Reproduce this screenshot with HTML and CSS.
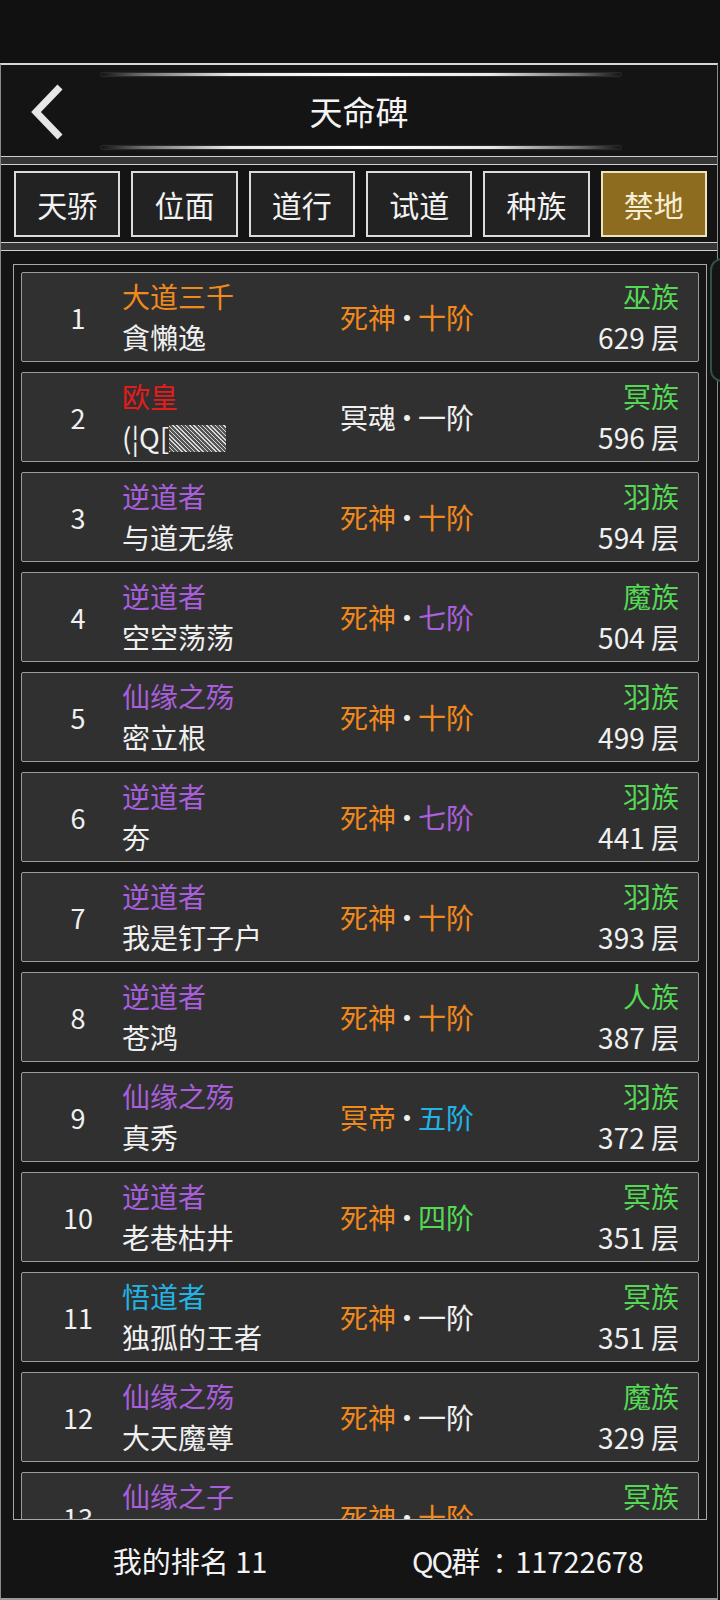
FILE: index.html
```html
<!DOCTYPE html>
<html lang="zh">
<head>
<meta charset="utf-8">
<title>天命碑</title>
<link rel="stylesheet" href="styles.css">
</head>
<body>
<div class="status"></div>
<div class="panel">
  <header class="titlebar">
    <div class="deco"></div>
    <div class="title-row">
      <svg class="back" width="40" height="56" viewBox="0 0 40 56"><path d="M33 3 L9 28 L33 53" fill="none" stroke="#e6e6e6" stroke-width="7"/></svg>
      <h1 class="title">天命碑</h1>
      <span></span>
    </div>
    <div class="deco"></div>
  </header>
  <div class="sep"></div>
  <nav class="tabs">
    <div class="tab">天骄</div>
    <div class="tab">位面</div>
    <div class="tab">道行</div>
    <div class="tab">试道</div>
    <div class="tab">种族</div>
    <div class="tab active">禁地</div>
  </nav>
  <div class="sep"></div>
  <main class="list-wrap">
    <div class="list">
      <div class="row"><div class="rank">1</div><div class="who"><div class="c-orange">大道三千</div><div>貪懶逸</div></div><div class="lvl"><span class="c-orange">死神</span><span class="dot">·</span><span class="c-orange">十阶</span></div><div class="side"><div class="c-green">巫族</div><div>629 层</div></div></div>
      <div class="row"><div class="rank">2</div><div class="who"><div class="c-red">欧皇</div><div>(¦Q[<span class="hatch"></span></div></div><div class="lvl"><span>冥魂</span><span class="dot">·</span><span>一阶</span></div><div class="side"><div class="c-green">冥族</div><div>596 层</div></div></div>
      <div class="row"><div class="rank">3</div><div class="who"><div class="c-purple">逆道者</div><div>与道无缘</div></div><div class="lvl"><span class="c-orange">死神</span><span class="dot">·</span><span class="c-orange">十阶</span></div><div class="side"><div class="c-green">羽族</div><div>594 层</div></div></div>
      <div class="row"><div class="rank">4</div><div class="who"><div class="c-purple">逆道者</div><div>空空荡荡</div></div><div class="lvl"><span class="c-orange">死神</span><span class="dot">·</span><span class="c-purple">七阶</span></div><div class="side"><div class="c-green">魔族</div><div>504 层</div></div></div>
      <div class="row"><div class="rank">5</div><div class="who"><div class="c-purple">仙缘之殇</div><div>密立根</div></div><div class="lvl"><span class="c-orange">死神</span><span class="dot">·</span><span class="c-orange">十阶</span></div><div class="side"><div class="c-green">羽族</div><div>499 层</div></div></div>
      <div class="row"><div class="rank">6</div><div class="who"><div class="c-purple">逆道者</div><div>夯</div></div><div class="lvl"><span class="c-orange">死神</span><span class="dot">·</span><span class="c-purple">七阶</span></div><div class="side"><div class="c-green">羽族</div><div>441 层</div></div></div>
      <div class="row"><div class="rank">7</div><div class="who"><div class="c-purple">逆道者</div><div>我是钉子户</div></div><div class="lvl"><span class="c-orange">死神</span><span class="dot">·</span><span class="c-orange">十阶</span></div><div class="side"><div class="c-green">羽族</div><div>393 层</div></div></div>
      <div class="row"><div class="rank">8</div><div class="who"><div class="c-purple">逆道者</div><div>苍鸿</div></div><div class="lvl"><span class="c-orange">死神</span><span class="dot">·</span><span class="c-orange">十阶</span></div><div class="side"><div class="c-green">人族</div><div>387 层</div></div></div>
      <div class="row"><div class="rank">9</div><div class="who"><div class="c-purple">仙缘之殇</div><div>真秀</div></div><div class="lvl"><span class="c-orange">冥帝</span><span class="dot">·</span><span class="c-cyan">五阶</span></div><div class="side"><div class="c-green">羽族</div><div>372 层</div></div></div>
      <div class="row"><div class="rank">10</div><div class="who"><div class="c-purple">逆道者</div><div>老巷枯井</div></div><div class="lvl"><span class="c-orange">死神</span><span class="dot">·</span><span class="c-green">四阶</span></div><div class="side"><div class="c-green">冥族</div><div>351 层</div></div></div>
      <div class="row"><div class="rank">11</div><div class="who"><div class="c-cyan">悟道者</div><div>独孤的王者</div></div><div class="lvl"><span class="c-orange">死神</span><span class="dot">·</span><span>一阶</span></div><div class="side"><div class="c-green">冥族</div><div>351 层</div></div></div>
      <div class="row"><div class="rank">12</div><div class="who"><div class="c-purple">仙缘之殇</div><div>大天魔尊</div></div><div class="lvl"><span class="c-orange">死神</span><span class="dot">·</span><span>一阶</span></div><div class="side"><div class="c-green">魔族</div><div>329 层</div></div></div>
      <div class="row"><div class="rank">13</div><div class="who"><div class="c-purple">仙缘之子</div><div>无名</div></div><div class="lvl"><span class="c-orange">死神</span><span class="dot">·</span><span class="c-orange">十阶</span></div><div class="side"><div class="c-green">冥族</div><div>321 层</div></div></div>
    </div>
  </main>
  <footer class="footer">
    <div>我的排名 11</div>
    <div><span class="qq">QQ</span>群<span class="colon">：</span>11722678</div>
  </footer>
  <div class="handle"></div>
</div>
</body>
</html>
```
FILE: styles.css
```css
* { box-sizing: border-box; }
html, body { margin: 0; padding: 0; }
body {
  width: 720px;
  height: 1600px;
  overflow: hidden;
  background: #111111;
  font-family: "Noto Sans CJK SC", "Noto Sans", sans-serif;
  color: #f0f0f0;
}
.status { height: 63px; background: #111111; }
.panel {
  position: relative;
  width: 718px;
  height: 1537px;
  background: #141414;
  border-top: 2px solid #d6d6d6;
  border-left: 1px solid #8a8a8a;
  border-right: 1px solid #8a8a8a;
  border-bottom: 2px solid #9a9a9a;
  display: flex;
  flex-direction: column;
}
.titlebar {
  height: 91px;
  padding: 8px 0 7px;
  display: flex;
  flex-direction: column;
}
.deco {
  height: 3px;
  width: 520px;
  margin-left: 100px;
  background: linear-gradient(90deg, rgba(255,255,255,0) 0%, rgba(200,200,200,0.5) 8%, #e8e8e8 25%, #ffffff 50%, #e8e8e8 75%, rgba(200,200,200,0.5) 92%, rgba(255,255,255,0) 100%);
  border-radius: 2px;
  box-shadow: 0 0 2px rgba(255,255,255,0.35);
}
.title-row {
  flex: 1;
  display: grid;
  grid-template-columns: 100px 1fr 100px;
  align-items: center;
}
.back { margin-left: 26px; margin-top: 1px; }
.title {
  margin: 0;
  text-align: center;
  font-weight: 400;
  font-size: 33px;
  line-height: 40px;
  color: #f4f4f4;
}
.sep {
  height: 9px;
  background: #363636;
  border-top: 1px solid #cfcfcf;
  border-bottom: 1px solid #cfcfcf;
}
.tabs {
  height: 77px;
  padding: 6px 10px 5px 13px;
  display: grid;
  grid-template-columns: repeat(6, 1fr);
  column-gap: 11px;
}
.tab {
  height: 66px;
  background: #222222;
  border: 2px solid #dcdcdc;
  display: flex;
  align-items: center;
  justify-content: center;
  font-size: 30px;
  color: #f2f2f2;
}
.tab.active {
  background: #8e6c1f;
  border-color: #efe3bd;
  color: #f6eed4;
}
.list-wrap {
  padding: 13px 10px 0 12px;
}
.list {
  height: 1256px;
  overflow: hidden;
  border: 1px solid #a8a8a8;
  background: #161616;
  padding: 7px 7px 0 7px;
  display: flex;
  flex-direction: column;
  gap: 10px;
}
.row {
  flex: 0 0 90px;
  height: 90px;
  width: 678px;
  background: #303030;
  border: 1px solid #9c9c9c;
  border-radius: 2px;
  display: grid;
  grid-template-columns: 80px 218px 1fr auto;
  align-items: center;
  padding: 0 19px 0 20px;
  font-size: 28px;
  line-height: 41px;
}
.rank {
  padding-right: 8px;
  text-align: center;
  font-size: 27px;
}
.side { text-align: right; }
.lvl { white-space: nowrap; }
.dot { display: inline-block; margin: 0 -3px; color: #f0f0f0; }
.c-orange { color: #f2891c; }
.c-purple { color: #a95fdc; }
.c-red { color: #e41c1c; }
.c-green { color: #55d955; }
.c-cyan { color: #22b4e6; }
.hatch {
  display: inline-block;
  width: 57px;
  height: 27px;
  vertical-align: -3px;
  background: repeating-linear-gradient(45deg, #d8d8d8 0 1px, #555555 1px 3px);
}
.footer {
  height: 78px;
  padding: 2px 20px 0 20px;
  display: grid;
  grid-template-columns: 1fr 1fr;
  align-items: center;
  text-align: center;
  font-size: 29px;
  color: #f2f2f2;
}
.qq { letter-spacing: -2px; }
.colon {
  font-family: "Noto Sans CJK JP", "Noto Sans CJK SC", sans-serif;
  padding-left: 12px;
  margin-right: -6px;
}
.handle {
  position: absolute;
  left: 709px;
  top: 193px;
  width: 24px;
  height: 124px;
  border: 2px solid #2f5247;
  border-radius: 12px;
  background: #141414;
}
```
